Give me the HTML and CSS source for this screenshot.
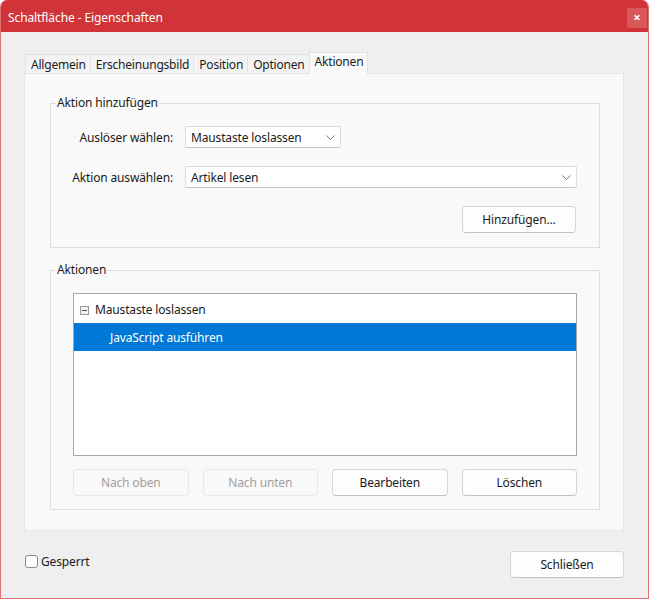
FILE: index.html
```html
<!DOCTYPE html>
<html lang="de">
<head>
<meta charset="utf-8">
<title>Schaltfläche - Eigenschaften</title>
<link rel="stylesheet" href="styles.css">
</head>
<body>
<div class="window">
  <div class="titlebar">
    <span class="title">Schaltfläche - Eigenschaften</span>
    <span class="close">×</span>
  </div>
  <div class="content">
    <div class="tabs">
      <div class="tab">Allgemein</div>
      <div class="tab">Erscheinungsbild</div>
      <div class="tab">Position</div>
      <div class="tab">Optionen</div>
      <div class="tab active">Aktionen</div>
    </div>
    <div class="panel">
      <fieldset class="group group-add">
        <legend>Aktion hinzufügen</legend>
        <div class="form">
          <span class="lbl">Auslöser wählen:</span>
          <div class="select short"><span>Maustaste loslassen</span><svg class="chev" width="9" height="5" viewBox="0 0 9 5"><polyline points="0.5,0.5 4.5,4.5 8.5,0.5" fill="none" stroke="#7a7a7a" stroke-width="1"/></svg></div>
          <span class="lbl">Aktion auswählen:</span>
          <div class="select"><span>Artikel lesen</span><svg class="chev" width="9" height="5" viewBox="0 0 9 5"><polyline points="0.5,0.5 4.5,4.5 8.5,0.5" fill="none" stroke="#7a7a7a" stroke-width="1"/></svg></div>
          <span></span>
          <div class="add-row"><button class="btn">Hinzufügen...</button></div>
        </div>
      </fieldset>
      <fieldset class="group group-actions">
        <legend>Aktionen</legend>
        <div class="actions-body">
          <div class="listbox">
            <div class="row parent"><span class="toggle"></span>Maustaste loslassen</div>
            <div class="row child selected">JavaScript ausführen</div>
          </div>
          <div class="buttons">
            <button class="btn" disabled>Nach oben</button>
            <button class="btn" disabled>Nach unten</button>
            <button class="btn">Bearbeiten</button>
            <button class="btn">Löschen</button>
          </div>
        </div>
      </fieldset>
    </div>
    <div class="footer">
      <label class="check"><span class="box"></span>Gesperrt</label>
      <button class="btn close-btn">Schließen</button>
    </div>
  </div>
</div>
</body>
</html>
```
FILE: styles.css
```css
* { box-sizing: border-box; }
html, body { margin: 0; padding: 0; background: #ffffff; }
body {
  font-family: "Noto Sans", "Open Sans", sans-serif;
  font-size: 12px;
  color: #1b1b1b;
}
.window {
  width: 649px;
  height: 599px;
  background: #efefef;
  border: 1px solid #e07276;
  border-top: 0;
  border-radius: 7px 7px 0 0;
  overflow: hidden;
  display: flex;
  flex-direction: column;
}
.titlebar {
  height: 32px;
  background: #d13438;
  color: #ffffff;
  display: flex;
  align-items: flex-start;
  justify-content: space-between;
  margin: 0 -1px;
  padding-left: 8px;
}
.title {
  padding-top: 2px;
  line-height: 32px;
  font-size: 12px;
  letter-spacing: -0.1px;
}
.close {
  width: 20px;
  height: 20px;
  margin-top: 8px;
  margin-right: 2px;
  background: #d9575a;
  color: #fff;
  font-size: 13px;
  font-weight: bold;
  line-height: 19px;
  text-align: center;
}
.content {
  flex: 1;
  padding: 20px 24px 0 23px;
  display: flex;
  flex-direction: column;
}
.tabs {
  display: flex;
  align-items: flex-end;
  height: 21px;
  padding-left: 1px;
}
.tab {
  height: 19px;
  line-height: 19px;
  padding: 0 4px 0 5px;
  background: #f3f3f3;
  border: 1px solid #e3e3e3;
  border-bottom: 0;
  border-left-width: 0;
  letter-spacing: -0.2px;
}
.tab:first-child { border-left-width: 1px; }
.tab.active {
  height: 22px;
  line-height: 18px;
  margin-bottom: -1px;
  background: #f9f9f9;
  border-left-width: 1px;
  margin-left: -1px;
  position: relative;
  z-index: 1;
}
.panel {
  height: 458px;
  background: #f9f9f9;
  border: 1px solid #e5e5e5;
  padding: 21px 23px 0 25px;
}
.group {
  margin: 0;
  padding: 0;
  border: 1px solid #dedede;
  min-width: 0;
}
.group legend {
  margin-left: 5px;
  padding: 0 1px;
  line-height: 16px;
  letter-spacing: -0.15px;
}
.form {
  display: grid;
  grid-template-columns: 122px 1fr;
  column-gap: 12px;
  row-gap: 18px;
  align-items: center;
  padding: 15px 22px 14px 0;
}
.lbl {
  text-align: right;
  letter-spacing: -0.15px;
}
.select {
  height: 22px;
  background: #ffffff;
  border: 1px solid #dcdcdc;
  border-bottom-color: #c8c8c8;
  border-radius: 2px;
  display: flex;
  align-items: center;
  justify-content: space-between;
  padding: 0 5px 0 5px;
  letter-spacing: -0.15px;
}
.select.short { width: 156px; }
.chev { flex: none; }
.add-row { display: flex; justify-content: flex-end; padding-right: 1px; }
.btn {
  font-family: inherit;
  font-size: 12px;
  letter-spacing: -0.15px;
  color: #1b1b1b;
  height: 27px;
  width: 114px;
  background: #fdfdfd;
  border: 1px solid #d6d6d6;
  border-bottom-color: #c2c2c2;
  border-radius: 4px;
  padding: 0;
}
.btn:disabled {
  color: #9f9f9f;
  background: #f9f9f9;
  border-color: #e7e7e7;
}
.group-actions { margin-top: 14px; }
.actions-body { padding: 15px 22px 13px 22px; }
.listbox {
  height: 163px;
  background: #ffffff;
  border: 1px solid #a9a9a9;
  padding-top: 1px;
}
.row {
  height: 28px;
  line-height: 28px;
  display: flex;
  align-items: center;
  letter-spacing: -0.15px;
}
.row.parent { padding-left: 6px; padding-top: 2px; }
.toggle {
  width: 9px;
  height: 9px;
  border: 1px solid #9a9a9a;
  background: #f2f2f2;
  margin-right: 6px;
  display: flex;
  align-items: center;
  justify-content: center;
}
.toggle::before {
  content: "";
  width: 5px;
  height: 1px;
  background: #555;
}
.row.child { padding-left: 36px; padding-top: 1px; }
.row.selected { background: #0078d7; color: #ffffff; }
.buttons {
  display: grid;
  grid-template-columns: repeat(4, 1fr);
  column-gap: 14px;
  margin-top: 13px;
}
.buttons .btn { width: auto; }
.footer {
  display: flex;
  align-items: center;
  justify-content: space-between;
  height: 66px;
}
.check {
  display: flex;
  align-items: center;
  margin-left: 1px;
  margin-top: -6px;
  letter-spacing: -0.15px;
}
.box {
  width: 13px;
  height: 13px;
  border: 1px solid #8a8a8a;
  border-radius: 3px;
  background: #ffffff;
  margin-right: 3px;
}
.close-btn { width: 114px; }
```
